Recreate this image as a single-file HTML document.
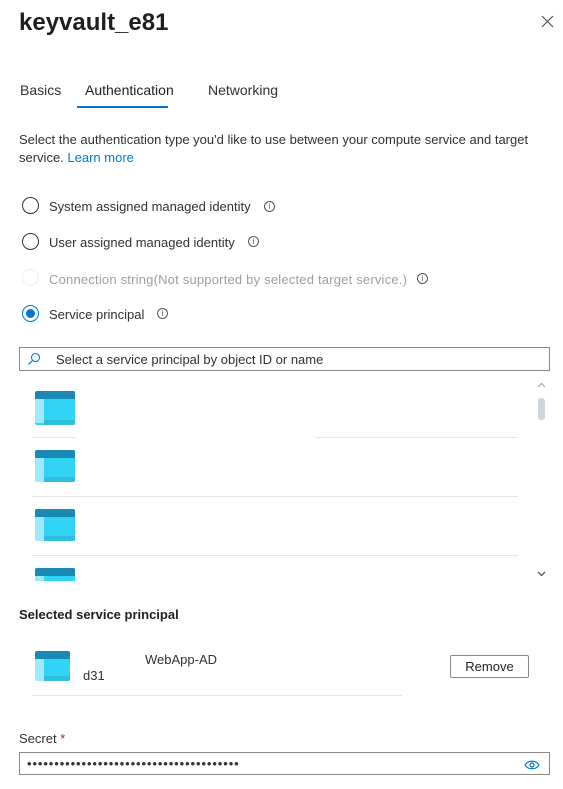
<!DOCTYPE html>
<html><head><style>
*{margin:0;padding:0;box-sizing:border-box}
body{width:563px;height:789px;background:#fff;font-family:"Liberation Sans",sans-serif;font-size:13px;color:#323130;position:relative;overflow:hidden}
.a{position:absolute;white-space:nowrap}
.ico{position:absolute;width:40px;height:32px;border-radius:2px;overflow:hidden;background:#32d4f5}
.ico:before{content:"";position:absolute;left:0;top:0;width:100%;height:8px;background:#1a8ab5}
.ico:after{content:"";position:absolute;left:0;top:8px;width:9px;height:24px;background:#9ee9fb}
.ico i{position:absolute;left:9px;bottom:0;right:0;height:5px;background:#2fbfdc}
.sep{position:absolute;height:1px;background:#e6e6e6}
.rad{position:absolute;left:22px;width:17px;height:17px;border:1.3px solid #323130;border-radius:50%}
.inf{position:absolute;width:11px;height:11px;border:1px solid #555;border-radius:50%;font-size:8px;line-height:9px;text-align:center;color:#555}
</style></head><body>
<div class="a" style="left:19px;top:9px;font-size:24px;font-weight:600;color:#201f1e">keyvault_e81</div>
<svg class="a" style="left:541px;top:15px" width="13" height="13" viewBox="0 0 13 13"><path d="M1 1L12 12M12 1L1 12" stroke="#555" stroke-width="1.2"/></svg>
<div class="a" style="left:20px;top:82px;font-size:14px">Basics</div>
<div class="a" style="left:85px;top:82px;font-size:14px;color:#201f1e">Authentication</div>
<div class="a" style="left:77px;top:106px;width:91px;height:2px;background:#0078d4"></div>
<div class="a" style="left:208px;top:82px;font-size:14px">Networking</div>
<div class="a" style="left:19px;top:131px;line-height:18px">Select the authentication type you'd like to use between your compute service and target<br>service. <span style="color:#0078d4">Learn more</span></div>
<div class="rad" style="top:197px"></div><div class="a" style="left:49px;top:199px">System assigned managed identity</div><div class="inf" style="left:264px;top:201px">i</div>
<div class="rad" style="top:233px"></div><div class="a" style="left:49px;top:235px">User assigned managed identity</div><div class="inf" style="left:248px;top:236px">i</div>
<div class="rad" style="top:269px;border-color:#eee"></div><div class="a" style="left:49px;top:272px;color:#a19f9d;letter-spacing:0.2px">Connection string(Not supported by selected target service.)</div><div class="inf" style="left:417px;top:273px">i</div>
<div class="rad" style="top:305px;border-color:#0078d4"><div style="position:absolute;left:2.5px;top:2.5px;width:9.5px;height:9.5px;border-radius:50%;background:#0078d4"></div></div><div class="a" style="left:49px;top:307px">Service principal</div><div class="inf" style="left:157px;top:308px">i</div>
<div class="a" style="left:19px;top:347px;width:531px;height:24px;border:1px solid #8a8886"></div>
<svg class="a" style="left:27px;top:352px" width="14" height="14" viewBox="0 0 14 14"><circle cx="8.5" cy="5.5" r="4" fill="none" stroke="#0078d4" stroke-width="1.1"/><path d="M5.5 8.5L1.5 12.5" stroke="#0078d4" stroke-width="1.2"/></svg>
<div class="a" style="left:56px;top:352px;color:#323130">Select a service principal by object ID or name</div>
<div class="ico" style="left:35px;top:391px;height:34px"><i></i></div>
<div class="sep" style="left:32px;top:437px;width:44px"></div><div class="sep" style="left:315px;top:437px;width:203px"></div>
<div class="ico" style="left:35px;top:450px"><i></i></div>
<div class="sep" style="left:32px;top:496px;width:486px"></div>
<div class="ico" style="left:35px;top:509px"><i></i></div>
<div class="sep" style="left:32px;top:555px;width:486px"></div>
<div style="position:absolute;left:0;top:568px;width:100px;height:13px;overflow:hidden"><div class="ico" style="left:35px;top:0"><i></i></div></div>
<svg class="a" style="left:537px;top:382px" width="9" height="6"><path d="M1 5L4.5 1.5L8 5" stroke="#aaa" fill="none" stroke-width="1.2"/></svg>
<div class="a" style="left:538px;top:398px;width:7px;height:22px;border-radius:3px;background:#d0d6de"></div>
<svg class="a" style="left:537px;top:571px" width="9" height="6"><path d="M1 1L4.5 4.5L8 1" stroke="#555" fill="none" stroke-width="1.3"/></svg>
<div class="a" style="left:19px;top:607px;font-weight:bold;color:#201f1e">Selected service principal</div>
<div class="ico" style="left:35px;top:651px;width:35px;height:30px"><i></i></div>
<div class="a" style="left:145px;top:652px">WebApp-AD</div>
<div class="a" style="left:83px;top:668px">d31</div>
<div class="a" style="left:450px;top:655px;width:79px;height:23px;border:1px solid #8a8886;border-radius:2px;text-align:center;line-height:21px;color:#201f1e">Remove</div>
<div class="sep" style="left:32px;top:695px;width:370px"></div>
<div class="a" style="left:19px;top:731px">Secret <span style="color:#a4262c">*</span></div>
<div class="a" style="left:19px;top:752px;width:531px;height:23px;border:1px solid #8a8886"></div>
<div class="a" style="left:27px;top:756px;font-size:13px;letter-spacing:0.9px;line-height:16px">•••••••••••••••••••••••••••••••••••••••</div>
<svg class="a" style="left:524px;top:760px" width="16" height="10" viewBox="0 0 16 10"><path d="M1 5C4 0 12 0 15 5C12 10 4 10 1 5Z" fill="none" stroke="#0078d4" stroke-width="1.2"/><circle cx="8" cy="5" r="2" fill="none" stroke="#0078d4" stroke-width="1.2"/></svg>
</body></html>
